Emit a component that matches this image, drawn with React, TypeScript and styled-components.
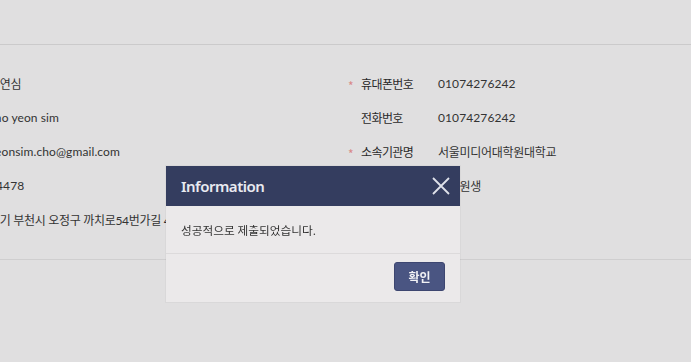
import React from 'react';
import styled, { createGlobalStyle } from 'styled-components';

const GlobalStyle = createGlobalStyle`
  html, body {
    margin: 0;
    padding: 0;
    background: #e0dfe0;
    overflow: hidden;
    font-family: "Noto Sans CJK KR", "Noto Sans", sans-serif;
  }
`;

interface Field {
  label: string;
  value: string;
  required?: boolean;
}

const leftFields: Field[] = [
  { label: '성명', value: '조연심', required: true },
  { label: '영문성명', value: 'cho yeon sim', required: true },
  { label: '이메일', value: 'yeonsim.cho@gmail.com', required: true },
  { label: '우편번호', value: '14478' },
  { label: '주소', value: '경기 부천시 오정구 까치로54번가길 44' },
];

const rightFields: Field[] = [
  { label: '휴대폰번호', value: '01074276242', required: true },
  { label: '전화번호', value: '01074276242' },
  { label: '소속기관명', value: '서울미디어대학원대학교', required: true },
  { label: '직위', value: '대학원생', required: true },
];

const hasHangul = (s: string) => /[가-힣]/.test(s);

const FieldList: React.FC<{ fields: Field[] }> = ({ fields }) => (
  <Column>
    {fields.map((f) => (
      <FieldRow key={f.label}>
        <Star $show={!!f.required}>*</Star>
        <Label>{f.label}</Label>
        <Value $hangul={hasHangul(f.value)}>{f.value}</Value>
      </FieldRow>
    ))}
  </Column>
);

const App: React.FC = () => {
  return (
    <>
      <GlobalStyle />
      <Page>
        <TopBar />
        <Section>
          <FieldGrid>
            <FieldList fields={leftFields} />
            <FieldList fields={rightFields} />
          </FieldGrid>
        </Section>
      </Page>

      <Dialog>
        <DialogHeader>
          <DialogTitle>Information</DialogTitle>
          <CloseButton aria-label="close">
            <svg width="18" height="18" viewBox="0 0 18 18">
              <path d="M1 1L17 17M17 1L1 17" stroke="#dfe2ea" strokeWidth="1.8" fill="none" />
            </svg>
          </CloseButton>
        </DialogHeader>
        <DialogBody>성공적으로 제출되었습니다.</DialogBody>
        <DialogFooter>
          <ConfirmButton>확인</ConfirmButton>
        </DialogFooter>
      </Dialog>
    </>
  );
};

const Page = styled.div`
  width: 691px;
  height: 362px;
  overflow: hidden;
`;

const TopBar = styled.div`
  height: 44px;
  border-bottom: 1px solid #cbcacb;
`;

const Section = styled.div`
  padding: 21px 0 23px;
  border-bottom: 1px solid #cfcecf;
`;

const FieldGrid = styled.div`
  display: grid;
  grid-template-columns: 449px 1fr;
  margin-left: -100px;
`;

const Column = styled.div`
  display: flex;
  flex-direction: column;
`;

const FieldRow = styled.div`
  display: flex;
  align-items: center;
  height: 34px;
  white-space: nowrap;
`;

const Star = styled.span<{ $show: boolean }>`
  width: 12px;
  font-size: 12px;
  color: #d98888;
  visibility: ${(p) => (p.$show ? 'visible' : 'hidden')};
  padding-top: 4px;
  text-indent: -1px;
`;

const Label = styled.span`
  width: 77px;
  font-size: 12px;
  color: #2a2a2a;
  letter-spacing: -0.6px;
`;

const Value = styled.span<{ $hangul: boolean }>`
  font-family: "Lato", "Noto Sans CJK KR", sans-serif;
  font-size: 12px;
  color: #333333;
  letter-spacing: ${(p) => (p.$hangul ? '-0.3px' : '0.1px')};
`;

const Dialog = styled.div`
  position: fixed;
  top: 166px;
  left: 166px;
  width: 294px;
  background: #ebe9ea;
  box-shadow: 0 0 0 1px rgba(0, 0, 0, 0.03);
  display: flex;
  flex-direction: column;
`;

const DialogHeader = styled.div`
  height: 40px;
  background: #343d5f;
  display: flex;
  align-items: center;
  justify-content: space-between;
  padding: 0 10px 0 15px;
`;

const DialogTitle = styled.h2`
  margin: 0;
  font-family: "Noto Sans", sans-serif;
  font-size: 15px;
  font-weight: 600;
  color: #e9eaf0;
  letter-spacing: -0.5px;
`;

const CloseButton = styled.button`
  display: flex;
  align-items: center;
  justify-content: center;
  background: none;
  border: none;
  padding: 0;
  width: 18px;
  height: 18px;
`;

const DialogBody = styled.div`
  height: 47px;
  display: flex;
  align-items: center;
  padding: 0 15px;
  font-size: 11.7px;
  color: #333333;
  border-bottom: 1px solid #dcdadb;
`;

const DialogFooter = styled.div`
  display: flex;
  justify-content: flex-end;
  padding: 8px 15px 11px;
`;

const ConfirmButton = styled.button`
  width: 51px;
  height: 29px;
  background: #4a5582;
  border: 1px solid #3d4670;
  border-radius: 3px;
  color: #f2f2f5;
  font-family: "Noto Sans CJK KR", sans-serif;
  font-size: 12px;
  font-weight: 700;
  padding: 0;
`;

export default App;
